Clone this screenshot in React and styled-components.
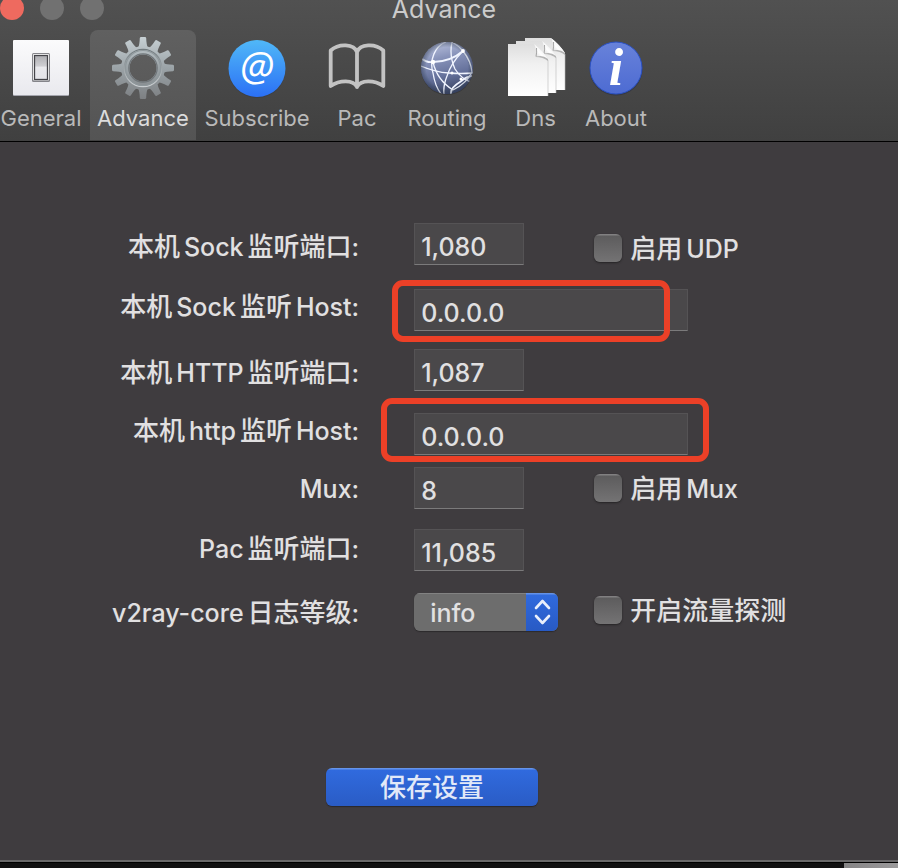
import React from 'react';
import styled, { createGlobalStyle } from 'styled-components';

const GlobalStyle = createGlobalStyle`
  * { box-sizing: border-box; }
  html { background: #111011; }
  body {
    margin: 0;
    background: #111011;
    color: #e1e0e1;
    font-family: Inter, "Noto Sans CJK SC", sans-serif;
    font-size: 25px;
    font-weight: 500;
    line-height: 30px;
  }
  button, input, select { font: inherit; color: inherit; margin: 0; }
`;

const Window = styled.main`
  background: #3f3c3f;
  border-bottom: 2px solid #6a696a;
  box-shadow: 0 1px 0 #000;
`;

const Header = styled.header`
  background: linear-gradient(#515151, #404040);
  border-bottom: 1px solid #000;
`;

const TitleBar = styled.div`
  display: grid;
  height: 20px;
  align-items: start;
`;

const Lights = styled.div`
  grid-area: 1 / 1;
  display: flex;
  gap: 16px;
  margin-top: -4px;
`;

const Light = styled.button`
  width: 24px;
  height: 24px;
  padding: 0;
  border: 0;
  border-radius: 50%;
  background: ${(p) => (p.$close ? '#ee6a5f' : '#717171')};
`;

const Title = styled.h1`
  grid-area: 1 / 1;
  justify-self: center;
  margin: 0;
  padding-right: 10px;
  font-size: 25px;
  font-weight: 400;
  line-height: 18px;
  color: #cbcbcb;
`;

const Toolbar = styled.nav`
  display: grid;
  grid-template-columns: 90px 106px 122px 78px 102px 75px 86px;
  padding: 10px 0 1px;
  & > :first-child { margin-right: 8px; }
`;

const Tab = styled.button`
  display: flex;
  flex-direction: column;
  align-items: center;
  justify-content: space-between;
  height: 110px;
  padding: 6px 0 8px;
  border: 0;
  border-radius: 8px 8px 0 0;
  background: ${(p) => (p.$active ? 'linear-gradient(#606060, #545454)' : 'transparent')};
  color: ${(p) => (p.$active ? '#dcdcdc' : '#b9b9b9')};
  font-size: 22px;
  font-weight: 400;
  line-height: 28px;
  white-space: nowrap;
`;

const Icon = styled.svg`
  display: block;
  width: 64px;
  height: 64px;
  overflow: visible;
`;

const Form = styled.form`
  display: grid;
  grid-template-columns: 2fr 3fr;
  padding-top: 81px;
`;

const Labels = styled.div`
  display: grid;
  grid-template-rows: 60px 66px 58px 58px 60px 64px 30px;
  justify-items: end;
  align-items: start;
  padding-top: 9px;
`;

const Label = styled.label`
  white-space: nowrap;
`;

const Run = styled.span`
  font-size: ${(p) => (p.$han ? '26px' : '25px')};
  & + & { margin-left: 4px; }
`;

const Controls = styled.div`
  display: grid;
  grid-template-columns: 180px 1fr;
  padding-left: 55px;
`;

const Fields = styled.div`
  display: grid;
  grid-template-rows: 66px 60px 64px 54px 62px 64px 38px;
  align-items: start;
`;

const Field = styled.div`
  position: relative;
  width: ${(p) => (p.$wide ? '274px' : '110px')};
`;

const TextInput = styled.input`
  display: block;
  width: 100%;
  height: 42px;
  padding: 6px 6px 0;
  border: 1px solid #555355;
  border-bottom: 1px solid #7b7a7b;
  border-radius: 0;
  background: #4a484a;
  outline: 0;
`;

const Highlight = styled.span`
  position: absolute;
  inset: ${(p) => p.$inset};
  border: 6px solid #ec4027;
  border-radius: 11px;
  pointer-events: none;
`;

const SelectBox = styled.div`
  position: relative;
  width: 144px;
  height: 38px;
  border-radius: 6px;
  overflow: hidden;
  box-shadow: 0 1px 1px #2c2a2c;
`;

const Select = styled.select`
  appearance: none;
  width: 100%;
  height: 100%;
  padding: 0 40px 0 16px;
  border: 0;
  border-top: 1px solid #828282;
  background: #6d6d6d;
`;

const Stepper = styled.svg`
  position: absolute;
  top: 0;
  right: 0;
  width: 32px;
  height: 38px;
  background: linear-gradient(#6392e8 1px, #306add 2px, #285ac4);
  pointer-events: none;
`;

const Checks = styled.div`
  display: grid;
  grid-template-rows: 240px 122px 32px;
  align-items: start;
  padding-top: 11px;
`;

const CheckLabel = styled.label`
  display: flex;
  align-items: flex-start;
  gap: 8px;
  white-space: nowrap;
`;

const Check = styled.input`
  appearance: none;
  flex: none;
  width: 28px;
  height: 28px;
  border-radius: 6px;
  background: linear-gradient(#818081 1px, #5d5c5d 2px, #747374);
  box-shadow: 0 1px 2px #252325;
`;

const Actions = styled.div`
  grid-column: 1 / -1;
  display: flex;
  justify-content: center;
  padding: 137px 34px 54px 0;
`;

const SaveButton = styled.button`
  width: 212px;
  height: 38px;
  padding: 2px 0 0;
  border: 0;
  border-radius: 6px;
  background: linear-gradient(#6594ea 1px, #306ade 2px, #2a5cc5);
  box-shadow: 0 1px 1px #29272c;
  color: #e2e9f8;
`;

const Backdrop = styled.div`
  display: flex;
  justify-content: flex-end;
  height: 6px;
  padding-top: 1px;
`;

const BackdropPanel = styled.div`
  width: 54px;
  background: linear-gradient(90deg, #858485, #9b9a9b);
`;

function Mixed({ children }) {
  return children
    .split(/([\u4e00-\u9fff]+|:$)/)
    .filter(Boolean)
    .map((part, i) => (part === ':' ? part : <Run key={i} $han={/[\u4e00-\u9fff]/.test(part)}>{part}</Run>));
}

const SwitchIcon = () => (
  <Icon viewBox="0 0 64 64" aria-hidden="true">
    <defs>
      <linearGradient id="plate" x2="0" y2="1"><stop stopColor="#fbfbfc" /><stop offset="1" stopColor="#e9e9ee" /></linearGradient>
      <linearGradient id="rocker" x2="0" y2="1"><stop stopColor="#aeaeb2" /><stop offset=".45" stopColor="#cfcfd3" /><stop offset=".47" stopColor="#e9e9ed" /><stop offset="1" stopColor="#e4e4e9" /></linearGradient>
    </defs>
    <rect x="4" y="5" width="56" height="55" rx="1" fill="#a4a5ad" />
    <rect x="4" y="4" width="56" height="55" rx="1" fill="url(#plate)" />
    <rect x="23" y="17" width="18" height="29" rx="1.500" fill="#85858a" />
    <rect x="24" y="18" width="16" height="26.500" rx="1" fill="#fff" />
    <rect x="25.500" y="19.500" width="13" height="24" fill="url(#rocker)" stroke="#45454a" strokeWidth="1.300" />
  </Icon>
);

const GearIcon = () => (
  <Icon viewBox="-32 -32 64 64" aria-hidden="true">
    <defs>
      <linearGradient id="steel" gradientUnits="userSpaceOnUse" x1="0" y1="-31" x2="0" y2="31"><stop stopColor="#c7d0d4" /><stop offset=".5" stopColor="#9ba3a7" /><stop offset="1" stopColor="#7d8083" /></linearGradient>
      <linearGradient id="rim" x2="0" y2="1"><stop stopColor="#717a7e" /><stop offset="1" stopColor="#c9cdd0" /></linearGradient>
    </defs>
    <mask id="gearShape">
      <circle r="22" fill="#fff" />
      {[0, 30, 60, 90, 120, 150, 180, 210, 240, 270, 300, 330].map((a) => (
        <path key={a} transform={`rotate(${a})`} d="M-5-20Q-3.400-23-3.200-30Q-3-31-2-31H2Q3-31 3.200-30Q3.400-23 5-20Z" fill="#fff" />
      ))}
      <circle r="13.500" fill="#000" />
    </mask>
    <rect x="-32" y="-32" width="64" height="64" fill="url(#steel)" mask="url(#gearShape)" />
    <circle r="18.700" fill="none" stroke="url(#rim)" strokeWidth="1.200" />
    <circle r="17.500" fill="none" stroke="#8f989c" strokeWidth="1.200" />
    <circle r="14.200" fill="none" stroke="#70767a" strokeWidth="1.200" />
  </Icon>
);

const AtIcon = () => (
  <Icon viewBox="0 0 64 64" aria-hidden="true">
    <defs><linearGradient id="sky" x2="0" y2="1"><stop stopColor="#50b8f8" /><stop offset="1" stopColor="#2b70f5" /></linearGradient></defs>
    <circle cx="32" cy="33.500" r="28.500" fill="#303640" opacity=".4" />
    <circle cx="32" cy="32.500" r="28.500" fill="url(#sky)" />
    <text x="32" y="45" textAnchor="middle" fontFamily="Open Sans" fontStyle="italic" fontWeight="400" fontSize="40" fill="#fff">@</text>
  </Icon>
);

const BookIcon = () => (
  <Icon viewBox="0 0 64 64" aria-hidden="true">
    <path d="M32 16C29 8 14 7 5.700 14.500V50C14 44.500 28 43 32 51C36 43 50 44.500 58.300 50V14.500C50 7 35 8 32 16V51" fill="none" stroke="#c3c3c3" strokeWidth="3.800" strokeLinejoin="round" strokeLinecap="round" />
  </Icon>
);

const GlobeIcon = () => (
  <Icon viewBox="0 0 64 64" aria-hidden="true">
    <defs>
      <linearGradient id="globe" x2=".25" y2="1"><stop stopColor="#c3cae4" /><stop offset=".38" stopColor="#8893ba" /><stop offset=".72" stopColor="#65719b" /><stop offset="1" stopColor="#404b6c" /></linearGradient>
      <radialGradient id="globeShade"><stop offset=".8" stopColor="#233" stopOpacity="0" /><stop offset="1" stopColor="#26304d" stopOpacity=".45" /></radialGradient>
      <clipPath id="globeClip"><circle cx="32" cy="32" r="26" /></clipPath>
    </defs>
    <circle cx="32" cy="33" r="26" fill="#292929" opacity=".5" />
    <circle cx="32" cy="32" r="26" fill="url(#globe)" />
    <g clipPath="url(#globeClip)" fill="none" stroke="#f0f4ff" strokeWidth="1.300">
      <path d="M31 6C20 10 14 24 18 37Q20 50 26 58" />
      <path d="M6 30Q20 36 34 37Q46 38 58 37" />
      <path d="M6 22Q12 27 18 26Q35 26 48 15" strokeWidth="1.900" />
      <path d="M18 26Q22 44 38 54" />
      <path d="M48 15Q36 27 32 40Q28 50 29 58" />
      <path d="M37 6Q34 20 40 33Q46 43 58 47" />
      <path d="M37 6Q44 10 48 15Q56 25 57 36" />
      <path d="M36 58Q35 52 45 46Q52 40 58 40" strokeWidth="1.900" />
      <path d="M57 36Q52 47 38 54" />
    </g>
    <circle cx="32" cy="32" r="26" fill="url(#globeShade)" />
    <g fill="#fff"><circle cx="18" cy="26" r="2.200" /><circle cx="48" cy="15" r="1.900" /><circle cx="37" cy="37" r="1.500" /><circle cx="46" cy="43" r="1.500" /></g>
  </Icon>
);

const Sheet = ({ x, y }) => (
  <g transform={`translate(${x} ${y})`}>
    <path d="M0 0H26Q34 6 40 15V52H0Z" fill="url(#paper)" />
    <path d="M28 13Q35 13 40 17V15Q36 10 28 12Z" fill="#8d8d8d" opacity=".6" />
    <path d="M40 16V52" stroke="#b8b8b8" strokeWidth=".6" />
    <path d="M26 0Q29 4 28 12.500Q35 10.500 40 15Q34 6 26 0Z" fill="url(#fold)" />
    <path d="M28.500 4Q29 8 28 12.500" fill="none" stroke="#8f8f8f" strokeWidth=".8" />
  </g>
);

const PagesIcon = () => (
  <Icon viewBox="0 0 64 64" aria-hidden="true">
    <defs>
      <linearGradient id="paper" x2="0" y2="1"><stop stopColor="#dedede" /><stop offset=".4" stopColor="#f1f1f1" /><stop offset="1" stopColor="#fff" /></linearGradient>
      <linearGradient id="fold" x1="0" y1="1" x2="1" y2="0"><stop stopColor="#c8c8c8" /><stop offset=".4" stopColor="#fff" /><stop offset="1" stopColor="#d6d6d6" /></linearGradient>
    </defs>
    <Sheet x="21" y="2" />
    <Sheet x="12" y="5" />
    <Sheet x="4" y="8" />
  </Icon>
);

const InfoIcon = () => (
  <Icon viewBox="0 0 64 64" aria-hidden="true">
    <defs><linearGradient id="info" x2="0" y2="1"><stop stopColor="#6882da" /><stop offset="1" stopColor="#4d6bd2" /></linearGradient></defs>
    <circle cx="32" cy="33" r="26.500" fill="#252b40" opacity=".5" />
    <circle cx="32" cy="32" r="26" fill="url(#info)" stroke="#2a51c4" />
    <text x="32" y="49" textAnchor="middle" fontFamily="Liberation Serif" fontStyle="italic" fontWeight="700" fontSize="52" fill="#fff">i</text>
  </Icon>
);

const tabs = [
  ['General', SwitchIcon],
  ['Advance', GearIcon],
  ['Subscribe', AtIcon],
  ['Pac', BookIcon],
  ['Routing', GlobeIcon],
  ['Dns', PagesIcon],
  ['About', InfoIcon],
];

const labels = [
  ['sockPort', '本机Sock监听端口:'],
  ['sockHost', '本机Sock监听Host:'],
  ['httpPort', '本机HTTP监听端口:'],
  ['httpHost', '本机http监听Host:'],
  ['mux', 'Mux:'],
  ['pacPort', 'Pac监听端口:'],
  ['logLevel', 'v2ray-core日志等级:'],
];

const fields = [
  { id: 'sockPort', value: '1,080' },
  { id: 'sockHost', value: '0.0.0.0', wide: true, mark: '-9px 18px -11px -22px' },
  { id: 'httpPort', value: '1,087' },
  { id: 'httpHost', value: '0.0.0.0', wide: true, mark: '-15px -21px -7px -33px' },
  { id: 'mux', value: '8' },
  { id: 'pacPort', value: '11,085' },
];

export default function App() {
  return (
    <>
      <GlobalStyle />
      <Window>
        <Header>
          <TitleBar>
            <Lights>
              <Light $close aria-label="Close" />
              <Light aria-label="Minimize" />
              <Light aria-label="Zoom" />
            </Lights>
            <Title>Advance</Title>
          </TitleBar>
          <Toolbar>
            {tabs.map(([name, Glyph]) => (
              <Tab key={name} type="button" $active={name === 'Advance'}>
                <Glyph />
                {name}
              </Tab>
            ))}
          </Toolbar>
        </Header>
        <Form onSubmit={(e) => e.preventDefault()}>
          <Labels>
            {labels.map(([id, text]) => (
              <Label key={id} htmlFor={id}><Mixed>{text}</Mixed></Label>
            ))}
          </Labels>
          <Controls>
            <Fields>
              {fields.map((f) => (
                <Field key={f.id} $wide={f.wide}>
                  <TextInput id={f.id} defaultValue={f.value} />
                  {f.mark && <Highlight $inset={f.mark} />}
                </Field>
              ))}
              <SelectBox>
                <Select id="logLevel" defaultValue="info">
                  <option>info</option>
                </Select>
                <Stepper viewBox="0 0 32 38" aria-hidden="true">
                  <path d="M10 15L16.500 8L23 15M10 23L16.500 30L23 23" fill="none" stroke="#e9effb" strokeWidth="2.600" strokeLinecap="round" strokeLinejoin="round" />
                </Stepper>
              </SelectBox>
            </Fields>
            <Checks>
              {['启用UDP', '启用Mux', '开启流量探测'].map((text) => (
                <CheckLabel key={text}>
                  <Check type="checkbox" />
                  <span><Mixed>{text}</Mixed></span>
                </CheckLabel>
              ))}
            </Checks>
          </Controls>
          <Actions>
            <SaveButton type="submit"><Mixed>保存设置</Mixed></SaveButton>
          </Actions>
        </Form>
      </Window>
      <Backdrop><BackdropPanel /></Backdrop>
    </>
  );
}
